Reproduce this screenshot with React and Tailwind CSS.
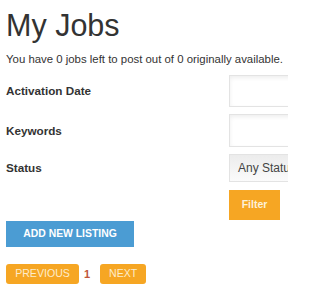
import React from "react";

const FormRow = ({ label, children, className }) => (
  <div className={"flex items-center " + (className || "")}>
    <label className="w-[223px] shrink-0 text-[11.7px] font-bold text-[#333]">{label}</label>
    {children}
  </div>
);

const App = () => {
  return (
    <div
      className="w-[288px] h-[288px] overflow-hidden bg-white px-[6px] text-[#333]"
      style={{ fontFamily: '"Liberation Sans", Arial, sans-serif' }}
    >
      <h1 className="pt-[8px] text-[30.5px] leading-[34px] text-[#333]">My Jobs</h1>
      <p className="mt-[10px] text-[11.4px] leading-[14px] whitespace-nowrap text-[#333]">
        You have 0 jobs left to post out of 0 originally available.
      </p>

      <div className="mt-[9px] flex flex-col">
        <FormRow label="Activation Date">
          <input className="h-[32px] w-[200px] shrink-0 border border-[#e3e3e3] bg-white shadow-[inset_0_2px_4px_rgba(0,0,0,0.07)] outline-none" />
        </FormRow>
        <FormRow label="Keywords" className="mt-[7px]">
          <input className="h-[33px] w-[200px] shrink-0 border border-[#e3e3e3] bg-white shadow-[inset_0_2px_4px_rgba(0,0,0,0.07)] outline-none" />
        </FormRow>
        <FormRow label="Status" className="mt-[7px]">
          <div className="flex h-[28px] w-[200px] shrink-0 items-center overflow-hidden border border-[#e3e3e3] bg-gradient-to-b from-[#ececec] to-[#fbfbfb] pl-[8px] text-[12px] whitespace-nowrap text-[#444]">
            Any Status
          </div>
        </FormRow>
        <div className="mt-[8px] flex">
          <button className="ml-[223px] h-[30px] w-[51px] bg-[#f6a623] text-[10.5px] font-bold text-[#fdf1d8]">
            Filter
          </button>
        </div>
      </div>

      <button className="h-[26px] w-[128px] bg-[#4b9cd3] text-[10.4px] font-bold text-white">
        ADD NEW LISTING
      </button>

      <div className="mt-[17px] flex items-center">
        <button className="h-[20px] w-[73px] rounded-[3px] bg-[#f6a623] text-[10.6px] text-[#fdeccb]">
          PREVIOUS
        </button>
        <span className="ml-[5px] text-[11px] font-bold text-[#c0563a]">1</span>
        <button className="ml-[10px] h-[20px] w-[46px] rounded-[3px] bg-[#f6a623] text-[10.6px] text-[#fdeccb]">
          NEXT
        </button>
      </div>
    </div>
  );
};

export default App;
